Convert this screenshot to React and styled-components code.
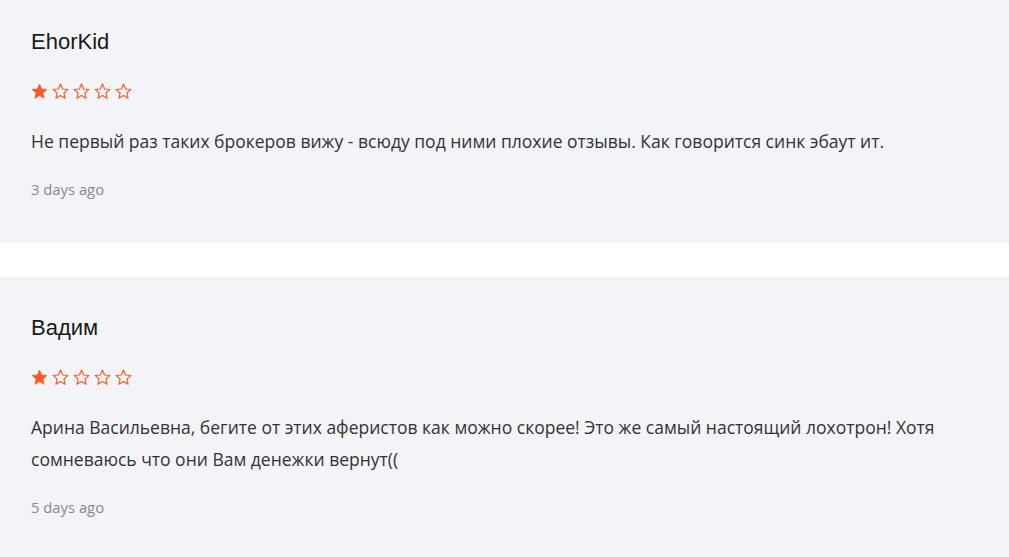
import React from 'react';
import styled, { createGlobalStyle } from 'styled-components';

const GlobalStyle = createGlobalStyle`
  html, body {
    margin: 0;
    padding: 0;
    background: #ffffff;
  }
`;

const List = styled.div`
  display: flex;
  flex-direction: column;
  gap: 34px;
  margin-top: -9px;
`;

const Card = styled.div`
  background-color: #f3f4f8;
  padding: 38px 31px 44px;
`;

const Name = styled.div`
  font-family: "Liberation Sans", Arial, sans-serif;
  font-size: 22px;
  line-height: 26px;
  color: #1a1a1a;
`;

const Stars = styled.div`
  display: flex;
  gap: 4px;
  margin-top: 28px;
  height: 17px;
`;

const Text = styled.p`
  margin: 25px 0 0;
  font-family: "Open Sans", sans-serif;
  font-size: 17.5px;
  line-height: 32px;
  color: #333333;
`;

const Date = styled.div`
  margin-top: 22px;
  font-family: "Open Sans", sans-serif;
  font-size: 14.8px;
  line-height: 20px;
  color: #8a8a8a;
`;

const Star = ({ filled }) => (
  <svg width="17" height="17" viewBox="0 0 24 24">
    <polygon
      points="12,1.5 15,8.4 22.5,9.1 16.8,14.1 18.5,21.6 12,17.7 5.5,21.6 7.2,14.1 1.5,9.1 9,8.4"
      fill={filled ? '#ff5722' : 'none'}
      stroke="#ff5722"
      strokeWidth={filled ? 1 : 1.6}
      strokeLinejoin="round"
    />
  </svg>
);

const reviews = [
  {
    name: 'EhorKid',
    rating: 1,
    text: 'Не первый раз таких брокеров вижу - всюду под ними плохие отзывы. Как говорится синк эбаут ит.',
    date: '3 days ago',
  },
  {
    name: 'Вадим',
    rating: 1,
    text: 'Арина Васильевна, бегите от этих аферистов как можно скорее! Это же самый настоящий лохотрон! Хотя сомневаюсь что они Вам денежки вернут((',
    date: '5 days ago',
  },
];

const App = () => {
  return (
    <>
      <GlobalStyle />
      <List>
        {reviews.map((r) => (
          <Card key={r.name}>
            <Name>{r.name}</Name>
            <Stars>
              {[1, 2, 3, 4, 5].map((i) => (
                <Star key={i} filled={i <= r.rating} />
              ))}
            </Stars>
            <Text>{r.text}</Text>
            <Date>{r.date}</Date>
          </Card>
        ))}
      </List>
    </>
  );
};

export default App;
